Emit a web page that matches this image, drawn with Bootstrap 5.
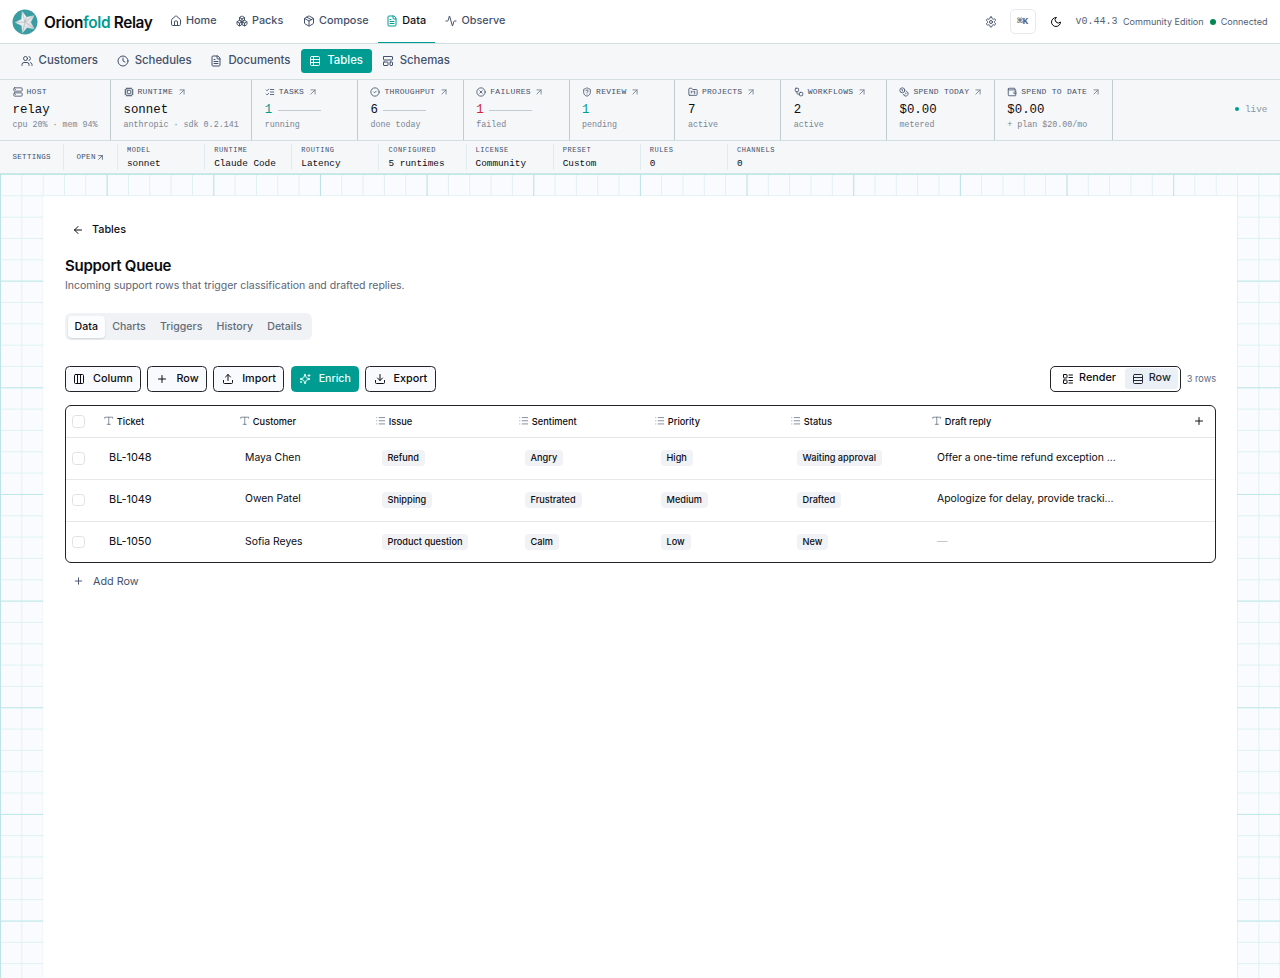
<!DOCTYPE html>
<html lang="en">
<head>
<meta charset="utf-8">
<meta name="viewport" content="width=device-width, initial-scale=1">
<title>Support Queue – Orionfold Relay</title>
<link href="https://cdn.jsdelivr.net/npm/bootstrap@5.3.0/dist/css/bootstrap.min.css" rel="stylesheet">
<style>
:root{--teal:#009b91;--ink:#0c0c12;--slate:#43506a;--muted:#6f7a8b;--line:#d3dfe0;--strip:#f5f7f9}
body{font-family:Inter,"Liberation Sans",sans-serif;font-size:11px;line-height:1.2;color:var(--ink);background:#fff;height:978px;overflow:hidden}
.mono{font-family:"Liberation Mono",monospace}
.ico{width:12px;height:12px;fill:none;stroke:currentColor;stroke-width:2;stroke-linecap:round;stroke-linejoin:round;flex:none;display:block}
a{color:inherit;text-decoration:none}
.topbar{height:44px;border-bottom:1px solid var(--line);padding-left:12px;padding-right:12.5px}
.brand{font-size:15.4px;font-weight:600;letter-spacing:-.37px;width:157.5px;gap:6px;white-space:nowrap}
.brand>span{padding-top:3px}
.brand span span,.teal{color:var(--teal)}
.topnav a{height:43px;padding:0 0 2px;gap:4.5px;font-weight:500;font-size:10.85px;color:var(--slate);white-space:nowrap}
.topnav a.on{color:var(--ink);border-bottom:1px solid var(--teal);padding-bottom:1px}
.topnav a.on .ico{color:var(--teal)}
.kbd-box{width:26px;height:25px;border:1px solid #e6eaee;border-radius:5px;font-size:9.6px;font-weight:700;letter-spacing:-.2px;color:#5a667c}
.edition{font-size:9.05px;color:#526074;padding-top:2px}
.dot{width:6px;height:6px;border-radius:50%;background:#058551}
.subbar{height:36px;background:var(--strip);border-bottom:1px solid var(--line);padding:0 0 1px 12px;gap:1.6px}
.subbar a{height:24px;padding:0 8.5px;gap:6.1px;font-size:11.4px;font-weight:500;color:var(--slate);border-radius:3.5px;white-space:nowrap}
.subbar a.on{background:var(--teal);color:#eafffb}
.metrics{height:61px;background:var(--strip);border-bottom:1px solid var(--line)}
.metric{border-right:1px solid #c0cdd0;padding:7.5px 0 0 12.5px;flex:none;white-space:nowrap}
.m-label{font-size:8px;letter-spacing:.27px;color:var(--slate);gap:4px;height:9px}
.m-label .ico{width:10px;height:10px}
.m-label .ico.arr{width:10px;height:10px;margin-left:-.5px;color:var(--muted)}
.m-value{font-size:12.4px;height:16px;margin-top:5.5px;gap:5.5px}
.m-value i{width:43px;height:1px;background:#c3cacf}
.m-note{font-size:8.35px;color:#7a8593;margin-top:1.5px;height:10px}
.settings{height:33px;background:var(--strip);border-bottom:1px solid #cfe6ea;font-size:8px}
.setting{width:87.15px;padding:0 0 0 9px;border-left:1px solid #e0edef;height:26px;white-space:nowrap;flex:none}
.s-label{font-size:7px;letter-spacing:.55px;color:var(--slate);margin-top:2px}
.s-value{font-size:9.4px;margin-top:3.5px;letter-spacing:-.02px}
.s-head{color:var(--slate);font-size:7.5px;letter-spacing:.3px;padding-left:12.5px}
.s-head .ico{width:9px;height:9px;margin-left:.5px}
.canvas{height:804px;padding:22px 43px 0;background-color:#f9fbfe;
background-image:linear-gradient(90deg,#bfe3e7 1px,transparent 1px),linear-gradient(#bfe9e8 1px,transparent 1px),linear-gradient(90deg,#e0f0f4 1px,transparent 1px),linear-gradient(#def2f2 1px,transparent 1px);
background-size:106.667px 106.667px,106.667px 106.667px,21.333px 21.333px,21.333px 21.333px}
.sheet{background:#fff;height:782px;padding:25px 21px 0 22px}
.back{font-weight:500;font-size:10.8px;gap:8px;padding-left:7px;height:17px}
.back span,.tool span,.addrow span{padding-top:1.5px}
.title{font-size:15px;font-weight:600;letter-spacing:-.28px;margin:19px 0 0;line-height:18px}
.desc{font-size:10.52px;color:#5b6573;margin-top:4px;line-height:14px}
.tabset{width:247px;height:27px;border-radius:6px;background:#f0f2f5;margin-top:20px;padding:2.5px;font-size:10.6px;font-weight:500;color:#646d79}
.tabset a{padding:0 7.1px;height:22px;line-height:21px;border-radius:4px;white-space:nowrap}
.tabset a.on{background:#fcfdff;color:var(--ink);box-shadow:0 1px 2px #0002}
.tool{height:26px;border:1px solid #24242b;border-radius:4.5px;background:#f8fafd;font-size:10.8px;font-weight:500;gap:8px;padding:0 0 0 7px;white-space:nowrap}
.tool.on{background:var(--teal);border-color:var(--teal);color:#e8fffb;font-size:10.6px}
.seg{height:26px;width:130.5px;border:1px solid #24242b;border-radius:5px;padding:1.5px 2px;font-size:10.8px;font-weight:500}
.seg a{gap:5px;border-radius:3px}
.seg a.on{background:#ebf0f7;color:#222832}
.grid-box{border:1px solid #222229;border-radius:6px;margin-top:13.5px;height:158px;overflow:hidden}
.grid-box table{table-layout:fixed;width:100%;border-collapse:collapse}
.grid-box th{height:31.5px;border-bottom:1px solid #e3e6e8;padding:0 0 0 8px;font-size:9.25px;font-weight:500}
.grid-box th div{gap:3.3px}
.grid-box td{height:41.8px;border-bottom:1px solid #e6e9eb;padding:0 0 1px 13px;font-size:10.4px;white-space:nowrap}
.grid-box td:nth-child(2){font-size:10.95px;padding-bottom:2px}
.grid-box tr:last-child td{border-bottom:0}
.grid-box th:first-child,.grid-box td:first-child{padding:0 0 0 6px}
th .ico{width:9.5px;height:9.5px;color:#566479;stroke-width:1.8;margin-bottom:1px}
.chk{display:block;width:12.5px;height:12.5px;border:1px solid #dfe2e5;border-radius:3.5px;background:#fff}
.tag{display:inline-block;margin:1px 0 0 .5px;height:16px;line-height:16px;padding:0 6px;border-radius:4px;background:#f0f2f5;font-size:9.2px;font-weight:500}
.addrow{font-size:10.8px;color:var(--slate);gap:9px;padding-left:8px;margin-top:11px}
</style>
</head>
<body>
<svg class="d-none">
<symbol id="home" viewBox="0 0 24 24"><path d="M15 21v-8a1 1 0 0 0-1-1h-4a1 1 0 0 0-1 1v8M3 10a2 2 0 0 1 .709-1.528l7-5.999a2 2 0 0 1 2.582 0l7 5.999A2 2 0 0 1 21 10v9a2 2 0 0 1-2 2H5a2 2 0 0 1-2-2z"/></symbol>
<symbol id="boxes" viewBox="0 0 24 24"><path d="M2.97 12.92A2 2 0 0 0 2 14.63v3.24a2 2 0 0 0 .97 1.71l3 1.8a2 2 0 0 0 2.06 0L12 19v-5.5l-5-3-4.03 2.42ZM7 16.5l-4.74-2.85M7 16.5l5-3M7 16.5v5.17M12 13.5V19l3.97 2.38a2 2 0 0 0 2.06 0l3-1.8a2 2 0 0 0 .97-1.71v-3.24a2 2 0 0 0-.97-1.71L17 10.5l-5 3ZM17 16.5l-5-3M17 16.5l4.74-2.85M17 16.5v5.17M7.97 4.42A2 2 0 0 0 7 6.13v4.37l5 3 5-3V6.13a2 2 0 0 0-.97-1.71l-3-1.8a2 2 0 0 0-2.06 0l-3 1.8ZM12 8 7.26 5.15M12 8l4.74-2.85M12 13.5V8"/></symbol>
<symbol id="package" viewBox="0 0 24 24"><path d="M11 21.73a2 2 0 0 0 2 0l7-4A2 2 0 0 0 21 16V8a2 2 0 0 0-1-1.73l-7-4a2 2 0 0 0-2 0l-7 4A2 2 0 0 0 3 8v8a2 2 0 0 0 1 1.73zM12 22V12M3.29 7 12 12l8.71-5M7.5 4.27l9 5.15"/></symbol>
<symbol id="file" viewBox="0 0 24 24"><path d="M15 2H6a2 2 0 0 0-2 2v16a2 2 0 0 0 2 2h12a2 2 0 0 0 2-2V7ZM14 2v4a2 2 0 0 0 2 2h4M10 9H8M16 13H8M16 17H8"/></symbol>
<symbol id="activity" viewBox="0 0 24 24"><path d="M22 12h-2.48a2 2 0 0 0-1.93 1.46l-2.35 8.36a.25.25 0 0 1-.48 0L9.24 2.18a.25.25 0 0 0-.48 0l-2.35 8.36A2 2 0 0 1 4.49 12H2"/></symbol>
<symbol id="gear" viewBox="0 0 24 24"><path d="M12.22 2h-.44a2 2 0 0 0-2 2v.18a2 2 0 0 1-1 1.73l-.43.25a2 2 0 0 1-2 0l-.15-.08a2 2 0 0 0-2.73.73l-.22.38a2 2 0 0 0 .73 2.73l.15.1a2 2 0 0 1 1 1.72v.51a2 2 0 0 1-1 1.74l-.15.09a2 2 0 0 0-.73 2.73l.22.38a2 2 0 0 0 2.73.73l.15-.08a2 2 0 0 1 2 0l.43.25a2 2 0 0 1 1 1.73V20a2 2 0 0 0 2 2h.44a2 2 0 0 0 2-2v-.18a2 2 0 0 1 1-1.73l.43-.25a2 2 0 0 1 2 0l.15.08a2 2 0 0 0 2.73-.73l.22-.39a2 2 0 0 0-.73-2.73l-.15-.08a2 2 0 0 1-1-1.74v-.5a2 2 0 0 1 1-1.74l.15-.09a2 2 0 0 0 .73-2.73l-.22-.38a2 2 0 0 0-2.73-.73l-.15.08a2 2 0 0 1-2 0l-.43-.25a2 2 0 0 1-1-1.73V4a2 2 0 0 0-2-2z"/><circle cx="12" cy="12" r="3"/></symbol>
<symbol id="moon" viewBox="0 0 24 24"><path d="M12 3a6 6 0 0 0 9 9 9 9 0 1 1-9-9Z"/></symbol>
<symbol id="users" viewBox="0 0 24 24"><path d="M16 21v-2a4 4 0 0 0-4-4H6a4 4 0 0 0-4 4v2M22 21v-2a4 4 0 0 0-3-3.87M16 3.13a4 4 0 0 1 0 7.75"/><circle cx="9" cy="7" r="4"/></symbol>
<symbol id="clock" viewBox="0 0 24 24"><circle cx="12" cy="12" r="10"/><path d="M12 6v6l4 2"/></symbol>
<symbol id="tablei" viewBox="0 0 24 24"><rect x="3" y="3" width="18" height="18" rx="2"/><path d="M9 3v18M3 9h18M3 15h18"/></symbol>
<symbol id="schema" viewBox="0 0 24 24"><rect x="3" y="3" width="18" height="7" rx="1"/><rect x="3" y="14" width="9" height="7" rx="1"/><rect x="16" y="14" width="5" height="7" rx="1"/></symbol>
<symbol id="server" viewBox="0 0 24 24"><rect x="2" y="2" width="20" height="8" rx="2"/><rect x="2" y="14" width="20" height="8" rx="2"/><path d="M6 6h.01M6 18h.01"/></symbol>
<symbol id="cpu" viewBox="0 0 24 24"><rect x="4" y="4" width="16" height="16" rx="2"/><rect x="8" y="8" width="8" height="8" rx="1"/><path d="M12 2v2M17 2v2M7 2v2M12 20v2M17 20v2M7 20v2M2 12h2M2 17h2M2 7h2M20 12h2M20 17h2M20 7h2"/></symbol>
<symbol id="checks" viewBox="0 0 24 24"><path d="m3 17 2 2 4-4M3 7l2 2 4-4M13 6h8M13 12h8M13 18h8"/></symbol>
<symbol id="okc" viewBox="0 0 24 24"><circle cx="12" cy="12" r="10"/><path d="m9 12 2 2 4-4"/></symbol>
<symbol id="xc" viewBox="0 0 24 24"><circle cx="12" cy="12" r="10"/><path d="m15 9-6 6M9 9l6 6"/></symbol>
<symbol id="shield" viewBox="0 0 24 24"><path d="M20 13c0 5-3.500 7.500-7.660 8.950a1 1 0 0 1-.67-.01C7.500 20.500 4 18 4 13V6a1 1 0 0 1 1-1c2 0 4.500-1.200 6.240-2.720a1.170 1.170 0 0 1 1.520 0C14.510 3.810 17 5 19 5a1 1 0 0 1 1 1zM9.100 9a3 3 0 0 1 5.820 1c0 2-3 3-3 3M12 17h.01"/></symbol>
<symbol id="folder" viewBox="0 0 24 24"><path d="M4 20h16a2 2 0 0 0 2-2V8a2 2 0 0 0-2-2h-7.930a2 2 0 0 1-1.660-.9l-.82-1.200A2 2 0 0 0 7.930 3H4a2 2 0 0 0-2 2v13c0 1.100.9 2 2 2ZM8 10v4M12 10v2M16 10v6"/></symbol>
<symbol id="flow" viewBox="0 0 24 24"><rect x="3" y="3" width="8" height="8" rx="2"/><path d="M7 11v4a2 2 0 0 0 2 2h4"/><rect x="13" y="13" width="8" height="8" rx="2"/></symbol>
<symbol id="coins" viewBox="0 0 24 24"><circle cx="8" cy="8" r="6"/><path d="M18.090 10.370A6 6 0 1 1 10.340 18M7 6h1v4M16.710 13.880l.7.710-2.820 2.820"/></symbol>
<symbol id="wallet" viewBox="0 0 24 24"><path d="M19 7V4a1 1 0 0 0-1-1H5a2 2 0 0 0 0 4h15a1 1 0 0 1 1 1v4h-3a2 2 0 0 0 0 4h3a1 1 0 0 0 1-1v-2a1 1 0 0 0-1-1M3 5v14a2 2 0 0 0 2 2h15a1 1 0 0 0 1-1v-4"/></symbol>
<symbol id="ne" viewBox="0 0 24 24"><path d="M7 7h10v10M7 17 17 7"/></symbol>
<symbol id="left" viewBox="0 0 24 24"><path d="m12 19-7-7 7-7M19 12H5"/></symbol>
<symbol id="cols" viewBox="0 0 24 24"><rect x="3" y="3" width="18" height="18" rx="2"/><path d="M9 3v18M15 3v18"/></symbol>
<symbol id="rows" viewBox="0 0 24 24"><rect x="3" y="3" width="18" height="18" rx="2"/><path d="M21 9H3M21 15H3"/></symbol>
<symbol id="plus" viewBox="0 0 24 24"><path d="M5 12h14M12 5v14"/></symbol>
<symbol id="up" viewBox="0 0 24 24"><path d="M12 3v12M17 8l-5-5-5 5M21 15v4a2 2 0 0 1-2 2H5a2 2 0 0 1-2-2v-4"/></symbol>
<symbol id="down" viewBox="0 0 24 24"><path d="M12 15V3M7 10l5 5 5-5M21 15v4a2 2 0 0 1-2 2H5a2 2 0 0 1-2-2v-4"/></symbol>
<symbol id="spark" viewBox="0 0 24 24"><path d="M9.937 15.500A2 2 0 0 0 8.500 14.063l-6.135-1.582a.5.5 0 0 1 0-.962L8.500 9.936A2 2 0 0 0 9.937 8.500l1.582-6.135a.5.5 0 0 1 .963 0L14.063 8.500A2 2 0 0 0 15.500 9.937l6.135 1.581a.5.5 0 0 1 0 .964L15.500 14.063a2 2 0 0 0-1.437 1.437l-1.582 6.135a.5.5 0 0 1-.963 0zM20 3v4M22 5h-4M4 17v2M5 18H3"/></symbol>
<symbol id="render" viewBox="0 0 24 24"><rect x="3" y="3" width="7" height="7" rx="1"/><rect x="3" y="14" width="7" height="7" rx="1"/><path d="M14 4h7M14 9h7M14 15h7M14 20h7"/></symbol>
<symbol id="tee" viewBox="0 0 24 24"><path d="M12 3v18M2 6V3h20v3M8 21h8"/></symbol>
<symbol id="list" viewBox="0 0 24 24"><path d="M8 4h14M8 12h14M8 20h14M2 4h.01M2 12h.01M2 20h.01"/></symbol>
</svg>

<header class="topbar d-flex align-items-center">
  <a class="brand d-flex align-items-center" href="#">
    <svg width="26" height="26" viewBox="0 0 26 26"><defs><linearGradient id="sg" x1="0" y1="0" x2="1" y2="1"><stop offset="0" stop-color="#fff"/><stop offset="1" stop-color="#d0d3d7"/></linearGradient></defs><circle cx="13" cy="13" r="12.500" fill="#3a9da1"/><path d="M10.200 2.600 14.600 8.300 21.900 6.700 18.600 13.200 22 19.800 15 18.500 10.500 23.700 9.700 16.600 3.400 13.400 9.600 10.300Z" fill="url(#sg)" stroke="#e6e8ea" stroke-width=".5"/><path d="M10.200 2.600 13 13 14.600 8.300M13 13l8.900-6.300M13 13l9 6.800M13 13l-2.500 10.700M13 13l-9.600.4" fill="none" stroke="#9da3a9" stroke-width=".5"/></svg>
    <span>Orion<span>fold</span> Relay</span>
  </a>
  <nav class="topnav d-flex">
    <a class="d-flex align-items-center" style="width:66px" href="#"><svg class="ico"><use href="#home"/></svg>Home</a>
    <a class="d-flex align-items-center" style="width:67px" href="#"><svg class="ico"><use href="#boxes"/></svg>Packs</a>
    <a class="d-flex align-items-center" style="width:75px" href="#"><svg class="ico"><use href="#package"/></svg>Compose</a>
    <a class="on d-flex align-items-center justify-content-center" style="width:57px" href="#"><svg class="ico"><use href="#file"/></svg>Data</a>
    <a class="d-flex align-items-center" style="padding-left:10.500px" href="#"><svg class="ico"><use href="#activity"/></svg>Observe</a>
  </nav>
  <div class="ms-auto d-flex align-items-center">
    <svg class="ico" style="color:#43506a;margin-right:13px"><use href="#gear"/></svg>
    <span class="kbd-box mono d-flex align-items-center justify-content-center">⌘K</span>
    <svg class="ico" style="margin:0 14px"><use href="#moon"/></svg>
    <span class="mono" style="font-size:10px;color:#526074;margin-right:5.500px;padding-top:1px">v0.44.3</span>
    <span class="edition" style="margin-right:6px">Community Edition</span>
    <span class="dot" style="margin-right:5px"></span>
    <span class="edition">Connected</span>
  </div>
</header>

<nav class="subbar d-flex align-items-center">
  <a class="d-flex align-items-center" href="#"><svg class="ico"><use href="#users"/></svg>Customers</a>
  <a class="d-flex align-items-center" href="#"><svg class="ico"><use href="#clock"/></svg>Schedules</a>
  <a class="d-flex align-items-center" href="#"><svg class="ico"><use href="#file"/></svg>Documents</a>
  <a class="on d-flex align-items-center" href="#"><svg class="ico"><use href="#tablei"/></svg>Tables</a>
  <a class="d-flex align-items-center" href="#"><svg class="ico"><use href="#schema"/></svg>Schemas</a>
</nav>

<section class="metrics mono d-flex">
  <div class="metric" style="width:111px"><div class="m-label d-flex align-items-center"><svg class="ico"><use href="#server"/></svg>HOST</div><div class="m-value d-flex align-items-center">relay</div><div class="m-note">cpu 20% · mem 94%</div></div>
  <div class="metric" style="width:141.300px"><div class="m-label d-flex align-items-center"><svg class="ico"><use href="#cpu"/></svg>RUNTIME<svg class="ico arr"><use href="#ne"/></svg></div><div class="m-value d-flex align-items-center">sonnet</div><div class="m-note">anthropic · sdk 0.2.141</div></div>
  <div class="metric" style="width:105.700px"><div class="m-label d-flex align-items-center"><svg class="ico"><use href="#checks"/></svg>TASKS<svg class="ico arr"><use href="#ne"/></svg></div><div class="m-value d-flex align-items-center"><span class="teal">1</span><i></i></div><div class="m-note">running</div></div>
  <div class="metric" style="width:105.800px"><div class="m-label d-flex align-items-center"><svg class="ico"><use href="#okc"/></svg>THROUGHPUT<svg class="ico arr"><use href="#ne"/></svg></div><div class="m-value d-flex align-items-center">6<i></i></div><div class="m-note">done today</div></div>
  <div class="metric" style="width:105.800px"><div class="m-label d-flex align-items-center"><svg class="ico"><use href="#xc"/></svg>FAILURES<svg class="ico arr"><use href="#ne"/></svg></div><div class="m-value d-flex align-items-center"><span style="color:#cf2734">1</span><i></i></div><div class="m-note">failed</div></div>
  <div class="metric" style="width:105.800px"><div class="m-label d-flex align-items-center"><svg class="ico"><use href="#shield"/></svg>REVIEW<svg class="ico arr"><use href="#ne"/></svg></div><div class="m-value d-flex align-items-center"><span class="teal">1</span></div><div class="m-note">pending</div></div>
  <div class="metric" style="width:105.800px"><div class="m-label d-flex align-items-center"><svg class="ico"><use href="#folder"/></svg>PROJECTS<svg class="ico arr"><use href="#ne"/></svg></div><div class="m-value d-flex align-items-center">7</div><div class="m-note">active</div></div>
  <div class="metric" style="width:105.800px"><div class="m-label d-flex align-items-center"><svg class="ico"><use href="#flow"/></svg>WORKFLOWS<svg class="ico arr"><use href="#ne"/></svg></div><div class="m-value d-flex align-items-center">2</div><div class="m-note">active</div></div>
  <div class="metric" style="width:107.800px"><div class="m-label d-flex align-items-center"><svg class="ico"><use href="#coins"/></svg>SPEND TODAY<svg class="ico arr"><use href="#ne"/></svg></div><div class="m-value d-flex align-items-center">$0.00</div><div class="m-note">metered</div></div>
  <div class="metric" style="width:118px"><div class="m-label d-flex align-items-center"><svg class="ico"><use href="#wallet"/></svg>SPEND TO DATE<svg class="ico arr"><use href="#ne"/></svg></div><div class="m-value d-flex align-items-center">$0.00</div><div class="m-note">+ plan $20.00/mo</div></div>
  <div class="ms-auto d-flex align-items-center" style="gap:6px;padding:0 12.500px 0 0;font-size:9.400px;color:#8b95a1"><span class="dot" style="width:4px;height:4px;margin-bottom:2px;background:#009b91"></span>live</div>
</section>

<section class="settings mono d-flex align-items-center">
  <div class="s-head" style="width:63px">SETTINGS</div>
  <div class="s-head d-flex align-items-center" style="width:54px;height:26px;border-left:1px solid #e0edef">OPEN<svg class="ico"><use href="#ne"/></svg></div>
  <div class="setting"><div class="s-label">MODEL</div><div class="s-value">sonnet</div></div>
  <div class="setting"><div class="s-label">RUNTIME</div><div class="s-value">Claude Code</div></div>
  <div class="setting"><div class="s-label">ROUTING</div><div class="s-value">Latency</div></div>
  <div class="setting"><div class="s-label">CONFIGURED</div><div class="s-value">5 runtimes</div></div>
  <div class="setting"><div class="s-label">LICENSE</div><div class="s-value">Community</div></div>
  <div class="setting"><div class="s-label">PRESET</div><div class="s-value">Custom</div></div>
  <div class="setting"><div class="s-label">RULES</div><div class="s-value">0</div></div>
  <div class="setting"><div class="s-label">CHANNELS</div><div class="s-value">0</div></div>
</section>

<main class="canvas">
  <div class="sheet">
    <a class="back d-flex align-items-center" href="#"><svg class="ico"><use href="#left"/></svg><span>Tables</span></a>
    <h1 class="title">Support Queue</h1>
    <p class="desc mb-0">Incoming support rows that trigger classification and drafted replies.</p>
    <div class="tabset d-flex"><a class="on" href="#">Data</a><a href="#">Charts</a><a href="#">Triggers</a><a href="#">History</a><a href="#">Details</a></div>
    <div class="d-flex align-items-center" style="margin-top:25.500px;gap:6.200px">
      <a class="tool d-flex align-items-center" style="width:76.300px" href="#"><svg class="ico"><use href="#cols"/></svg><span>Column</span></a>
      <a class="tool d-flex align-items-center" style="width:59.500px;padding-left:8px" href="#"><svg class="ico"><use href="#plus"/></svg><span>Row</span></a>
      <a class="tool d-flex align-items-center" style="width:71.300px;padding-left:8px" href="#"><svg class="ico"><use href="#up"/></svg><span>Import</span></a>
      <a class="tool on d-flex align-items-center" style="width:68.200px" href="#"><svg class="ico"><use href="#spark"/></svg><span>Enrich</span></a>
      <a class="tool d-flex align-items-center" style="width:71.300px;padding-left:7.500px" href="#"><svg class="ico"><use href="#down"/></svg><span>Export</span></a>
      <div class="seg ms-auto d-flex"><a class="d-flex align-items-center justify-content-center" style="width:72px" href="#"><svg class="ico"><use href="#render"/></svg>Render</a><a class="on d-flex align-items-center justify-content-center flex-fill" href="#"><svg class="ico"><use href="#rows"/></svg>Row</a></div>
      <span style="font-size:9.200px;color:#5d6a80">3 rows</span>
    </div>
    <div class="grid-box">
      <table>
        <colgroup><col style="width:30px"><col style="width:136px"><col style="width:136px"><col style="width:143px"><col style="width:136px"><col style="width:136px"><col style="width:141px"><col style="width:200px"><col></colgroup>
        <thead><tr>
          <th><span class="chk"></span></th>
          <th><div class="d-flex align-items-center"><svg class="ico"><use href="#tee"/></svg>Ticket</div></th>
          <th><div class="d-flex align-items-center"><svg class="ico"><use href="#tee"/></svg>Customer</div></th>
          <th><div class="d-flex align-items-center"><svg class="ico"><use href="#list"/></svg>Issue</div></th>
          <th><div class="d-flex align-items-center"><svg class="ico"><use href="#list"/></svg>Sentiment</div></th>
          <th><div class="d-flex align-items-center"><svg class="ico"><use href="#list"/></svg>Priority</div></th>
          <th><div class="d-flex align-items-center"><svg class="ico"><use href="#list"/></svg>Status</div></th>
          <th><div class="d-flex align-items-center"><svg class="ico"><use href="#tee"/></svg>Draft reply</div></th>
          <th><svg class="ico ms-auto" style="width:12px;height:12px;margin-right:10px;color:#15151b;stroke-width:2"><use href="#plus"/></svg></th>
        </tr></thead>
        <tbody>
          <tr><td><span class="chk"></span></td><td>BL-1048</td><td>Maya Chen</td><td><span class="tag">Refund</span></td><td><span class="tag">Angry</span></td><td><span class="tag">High</span></td><td><span class="tag">Waiting approval</span></td><td>Offer a one-time refund exception …</td><td></td></tr>
          <tr><td><span class="chk"></span></td><td>BL-1049</td><td>Owen Patel</td><td><span class="tag">Shipping</span></td><td><span class="tag">Frustrated</span></td><td><span class="tag">Medium</span></td><td><span class="tag">Drafted</span></td><td>Apologize for delay, provide tracki…</td><td></td></tr>
          <tr><td><span class="chk"></span></td><td>BL-1050</td><td>Sofia Reyes</td><td><span class="tag">Product question</span></td><td><span class="tag">Calm</span></td><td><span class="tag">Low</span></td><td><span class="tag">New</span></td><td style="color:#b5bac1">—</td><td></td></tr>
        </tbody>
      </table>
    </div>
    <a class="addrow d-flex align-items-center" href="#"><svg class="ico" style="width:11px"><use href="#plus"/></svg><span>Add Row</span></a>
  </div>
</main>
<script src="https://cdn.jsdelivr.net/npm/bootstrap@5.3.0/dist/js/bootstrap.bundle.min.js"></script>
</body>
</html>
